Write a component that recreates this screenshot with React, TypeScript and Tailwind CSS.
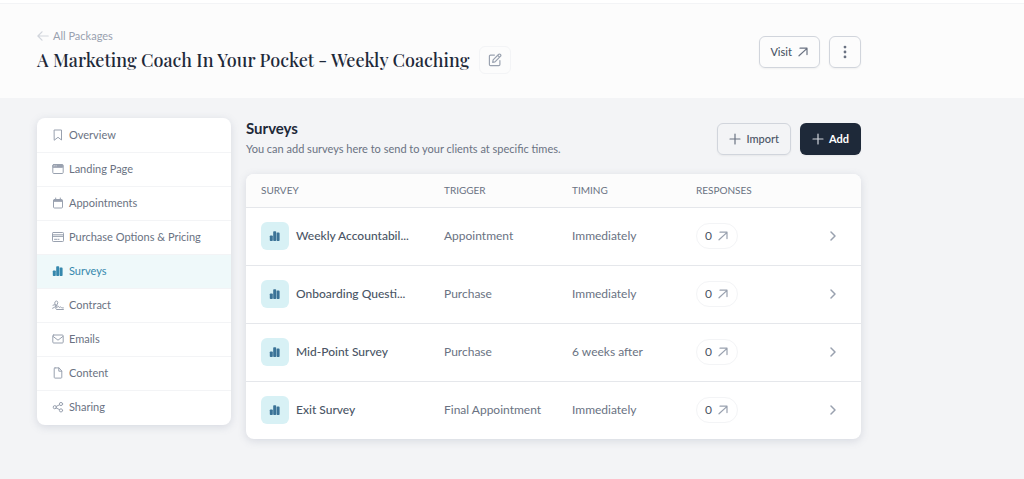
import type { ReactNode } from "react";
import clsx from "clsx";

interface IconProps {
  className?: string;
  children?: ReactNode;
}

function Icon({ className, children }: IconProps) {
  return (
    <svg
      viewBox="0 0 12 12"
      fill="none"
      stroke="currentColor"
      strokeLinecap="round"
      strokeLinejoin="round"
      aria-hidden="true"
      className={clsx("shrink-0", className)}
    >
      {children}
    </svg>
  );
}

function BarsIcon({ className }: IconProps) {
  return (
    <Icon className={className}>
      <g fill="currentColor" stroke="none">
        <rect x="0.8" y="5.4" width="3" height="5.6" rx="0.8" />
        <rect x="4.2" y="1.2" width="3" height="9.8" rx="0.8" />
        <rect x="7.6" y="2.6" width="3" height="8.4" rx="0.8" />
      </g>
    </Icon>
  );
}

function ArrowUpRightIcon({ className }: IconProps) {
  return (
    <Icon className={className}>
      <path d="M2 9.8 9.8 2.6M3 2.2h7v6.4" strokeWidth="1.2" />
    </Icon>
  );
}

function PlusIcon({ className }: IconProps) {
  return (
    <Icon className={className}>
      <path d="M6 1v10M1 6h10" strokeWidth="1.2" />
    </Icon>
  );
}

const navItems = [
  {
    label: "Overview",
    icon: (
      <Icon className="size-3">
        <path d="M2.5 1h7v10L6 8.3 2.5 11z" />
      </Icon>
    ),
  },
  {
    label: "Landing Page",
    icon: (
      <Icon className="size-3">
        <rect x="0.8" y="1.5" width="10.4" height="9" rx="1" />
        <path d="M1.3 2h9.4v2.3H1.3z" fill="currentColor" />
        <path d="M2.2 2.8h.2M4 2.8h.2" stroke="white" strokeWidth="0.7" />
      </Icon>
    ),
  },
  {
    label: "Appointments",
    icon: (
      <Icon className="size-3">
        <rect x="1.5" y="2.5" width="9" height="8.5" rx="1" />
        <path d="M2 3h8v1.3H2z" fill="currentColor" />
        <path d="M3.7 1v1.5M8.3 1v1.5" />
      </Icon>
    ),
  },
  {
    label: "Purchase Options & Pricing",
    icon: (
      <Icon className="size-3">
        <rect x="0.5" y="1.5" width="11" height="9" rx="0.8" />
        <path d="M.5 3.8h11M.5 5.4h11M2.5 8.3h2.3M6 8.3h1" />
      </Icon>
    ),
  },
  { label: "Surveys", icon: <BarsIcon className="size-3" /> },
  {
    label: "Contract",
    icon: (
      <Icon className="size-3">
        <path d="M.6 9.3C2.8 8.6 5.6 5.9 5.8 3.6 5.9 1.9 3.9 1.4 3.1 2.8c-.9 1.7.3 3 .8 5.4M1 6.2c2.2-.9 4-.7 4 .5 0 1.3-1.9 2.2-1.3 2.7.6.4 1.8-2.1 2.8-2.1.7 0 .2 1.3.9 1.3.6 0 .7-.7 1.3-.7.6 0 .5 1 1.2 1h1.5M4.6 10.5h6.8" />
      </Icon>
    ),
  },
  {
    label: "Emails",
    icon: (
      <Icon className="size-3">
        <rect x="0.8" y="2" width="10.4" height="8" rx="0.9" />
        <path d="m1.2 3.5 4.8 3.7 4.8-3.7" />
      </Icon>
    ),
  },
  {
    label: "Content",
    icon: (
      <Icon className="size-3">
        <path d="M3 .9h4L9.8 4v6.3a.8.8 0 0 1-.8.8H3a.8.8 0 0 1-.8-.8V1.7A.8.8 0 0 1 3 .9zM6.8 1v3.2h2.9" />
      </Icon>
    ),
  },
  {
    label: "Sharing",
    icon: (
      <Icon className="size-3">
        <circle cx="2.8" cy="6.2" r="1.6" />
        <circle cx="9" cy="3" r="1.6" />
        <circle cx="9" cy="9.4" r="1.6" />
        <path d="m4.3 5.4 3.2-1.6M4.3 7l3.2 1.6" />
      </Icon>
    ),
  },
];

const surveys = [
  { name: "Weekly Accountabil...", trigger: "Appointment", timing: "Immediately", responses: 0 },
  { name: "Onboarding Questi...", trigger: "Purchase", timing: "Immediately", responses: 0 },
  { name: "Mid-Point Survey", trigger: "Purchase", timing: "6 weeks after", responses: 0 },
  { name: "Exit Survey", trigger: "Final Appointment", timing: "Immediately", responses: 0 },
];

function PackageHeader() {
  return (
    <header className="border-b border-gray-100 bg-[#fcfcfc]">
      <div className="flex max-w-[861px] items-start justify-between pt-6 pb-[22px] pl-[37px]">
        <div>
          <a href="#packages" className="flex w-fit items-center gap-1 text-[11px] leading-4 text-gray-400">
            <Icon className="size-3 text-gray-300">
              <path d="M11.2 6H1M5 1.8.9 6 5 10.2" strokeWidth="1.2" />
            </Icon>
            All Packages
          </a>
          <div className="flex items-center gap-2.5">
            <h1 className="font-['Playfair_Display','Liberation_Serif',serif] text-[18px] leading-8 font-medium text-gray-800">
              A Marketing Coach In Your Pocket - Weekly Coaching
            </h1>
            <button
              type="button"
              aria-label="Edit name"
              className="flex h-7 w-8 items-center justify-center rounded-md border border-gray-100 text-gray-400"
            >
              <Icon className="size-3.5">
                <path d="M5.5 1.8H2.2a1 1 0 0 0-1 1v7a1 1 0 0 0 1 1h7a1 1 0 0 0 1-1V6.5M4 8l.4-2.1 4.8-4.8a.8.8 0 0 1 1.2 0l.4.4a.8.8 0 0 1 0 1.2L6 7.6zM8.3 2l1.6 1.6" />
              </Icon>
            </button>
          </div>
        </div>
        <div className="flex gap-[9px] pt-2">
          <button
            type="button"
            className="flex h-8 items-center gap-[5px] rounded-md border border-gray-300 px-2.5 text-[11px] font-medium text-gray-600 shadow-xs"
          >
            Visit
            <ArrowUpRightIcon className="size-3 text-gray-500" />
          </button>
          <button
            type="button"
            aria-label="More actions"
            className="flex size-8 items-center justify-center rounded-md border border-gray-300 text-gray-500 shadow-xs"
          >
            <Icon className="size-3.5">
              <g fill="currentColor" stroke="none">
                <circle cx="6" cy="1.8" r="1.2" />
                <circle cx="6" cy="6" r="1.2" />
                <circle cx="6" cy="10.2" r="1.2" />
              </g>
            </Icon>
          </button>
        </div>
      </div>
    </header>
  );
}

function SideNav() {
  return (
    <nav className="w-[194px] shrink-0 overflow-hidden rounded-lg bg-white py-px shadow-[0_2px_8px_rgba(100,110,140,0.2)]">
      <ul className="divide-y divide-gray-100">
        {navItems.map((item) => {
          const active = item.label === "Surveys";
          return (
            <li key={item.label}>
              <a
                href="#"
                aria-current={active ? "page" : undefined}
                className={clsx(
                  "flex items-center gap-[5px] px-[15px] pt-[7px] pb-[9px] text-[11px] leading-[17px]",
                  active ? "bg-[#eff9fa] text-[#3688ad]" : "text-gray-500"
                )}
              >
                <span className={active ? "text-[#3688ad]" : "text-gray-400"}>{item.icon}</span>
                {item.label}
              </a>
            </li>
          );
        })}
      </ul>
    </nav>
  );
}

function SurveyTable() {
  return (
    <div className="overflow-hidden rounded-lg bg-white shadow-[0_2px_8px_rgba(100,110,140,0.2)]">
      <table className="w-full table-fixed text-left">
        <thead>
          <tr className="h-[33px] border-b border-gray-200 bg-[#fcfcfc] text-[10px] text-gray-500 uppercase">
            <th className="w-[183px] pl-[15px] font-normal">Survey</th>
            <th className="w-32 pl-[15px] font-normal">Trigger</th>
            <th className="w-[124px] pl-[15px] font-normal">Timing</th>
            <th className="pl-[15px] font-normal">Responses</th>
            <th className="w-11" aria-label="Open" />
          </tr>
        </thead>
        <tbody className="divide-y divide-gray-200">
          {surveys.map((survey) => (
            <tr key={survey.name} className="h-[58px] text-xs text-gray-500">
              <td className="pl-[15px]">
                <div className="flex items-center gap-[7px]">
                  <span className="flex size-7 shrink-0 items-center justify-center rounded-md bg-[#d8f1f5] text-[#3b7397]">
                    <BarsIcon className="size-3" />
                  </span>
                  <span className="font-medium whitespace-nowrap text-gray-600">{survey.name}</span>
                </div>
              </td>
              <td className="pl-[15px]">{survey.trigger}</td>
              <td className="pl-[15px]">{survey.timing}</td>
              <td className="pl-[15px]">
                <a
                  href="#responses"
                  className="flex h-[26px] w-fit items-center gap-[5px] rounded-full border border-gray-100 px-2 text-gray-600"
                >
                  {survey.responses}
                  <ArrowUpRightIcon className="size-3 text-gray-400" />
                </a>
              </td>
              <td>
                <button type="button" aria-label={"Open " + survey.name} className="ml-2.5 flex text-gray-400">
                  <Icon className="size-3">
                    <path d="m4 2 4 4-4 4" strokeWidth="1.5" />
                  </Icon>
                </button>
              </td>
            </tr>
          ))}
        </tbody>
      </table>
    </div>
  );
}

export default function App() {
  return (
    <div className="min-h-screen bg-gray-100 font-['Lato',sans-serif]">
      <div className="h-1 border-b border-gray-100 bg-white" />
      <PackageHeader />
      <div className="flex max-w-[861px] items-start gap-[15px] pt-[19px] pb-8 pl-[37px]">
        <SideNav />
        <main className="min-w-0 flex-1">
          <div className="flex items-start justify-between pb-[14px]">
            <div>
              <h2 className="text-[15px] leading-5 font-bold text-gray-800">Surveys</h2>
              <p className="text-[11px] leading-[22px] text-gray-500">
                You can add surveys here to send to your clients at specific times.
              </p>
            </div>
            <div className="flex gap-[9px] pt-[5px]">
              <button
                type="button"
                className="flex h-8 items-center gap-[5px] rounded-md border border-gray-300 px-[11px] text-[11px] font-medium text-gray-600 shadow-xs"
              >
                <PlusIcon className="size-3 text-gray-500" />
                Import
              </button>
              <button
                type="button"
                className="flex h-8 items-center gap-[5px] rounded-md bg-gray-800 px-3 text-[11px] font-bold text-white shadow-xs"
              >
                <PlusIcon className="size-3 text-gray-300" />
                Add
              </button>
            </div>
          </div>
          <SurveyTable />
        </main>
      </div>
    </div>
  );
}
